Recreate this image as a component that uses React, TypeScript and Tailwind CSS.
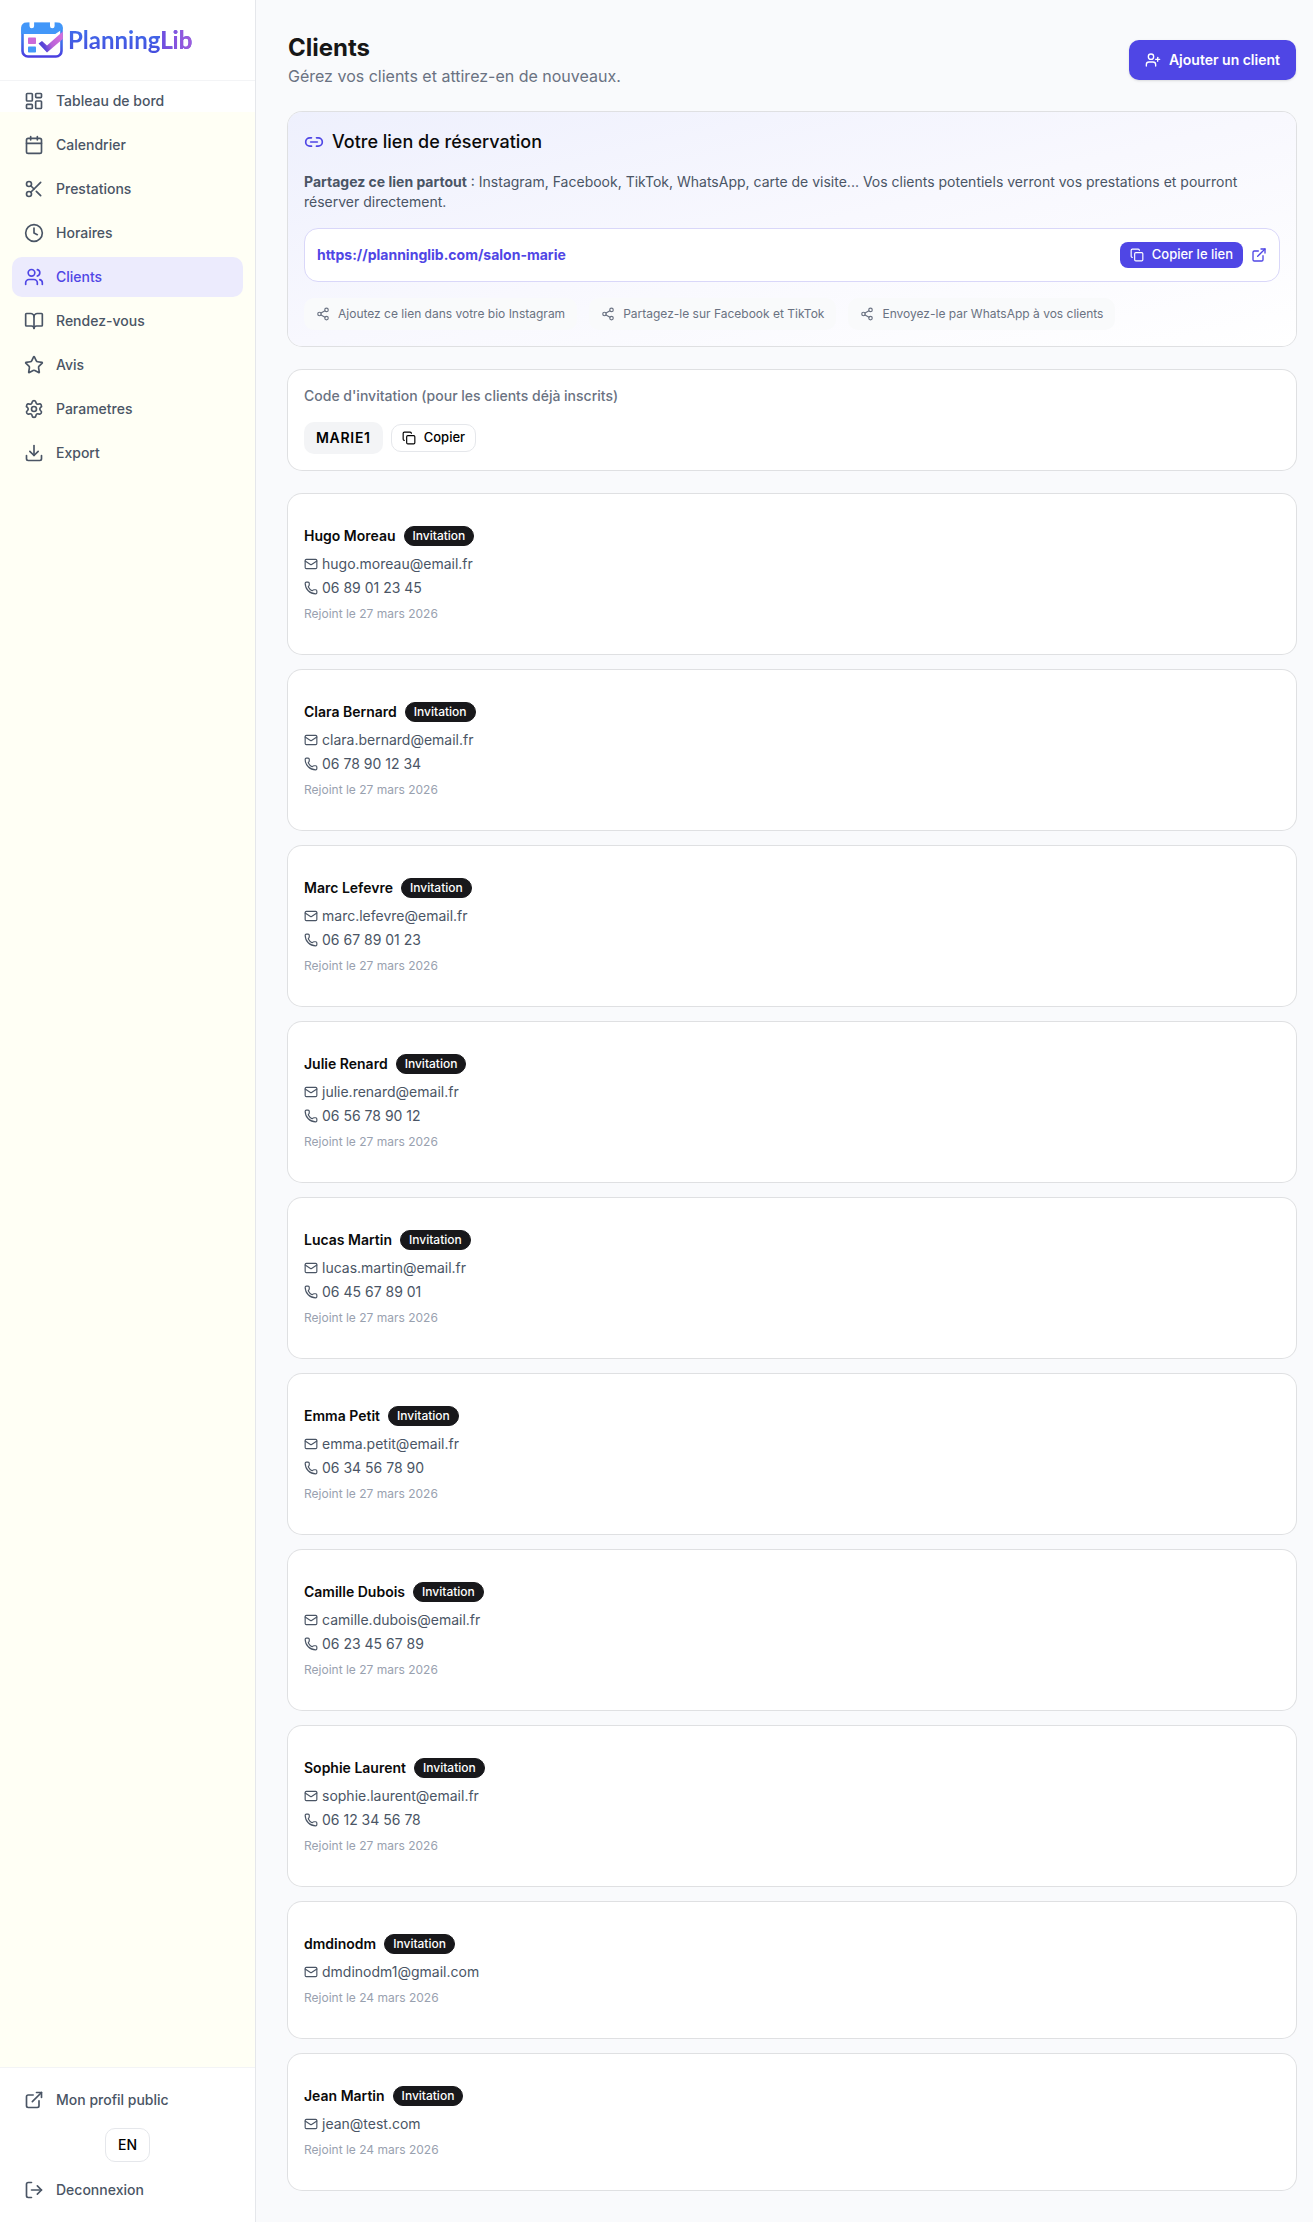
import {
  BookOpen,
  Calendar,
  Clock,
  Copy,
  Download,
  ExternalLink,
  LayoutDashboard,
  Link2,
  LogOut,
  Mail,
  Phone,
  Scissors,
  Settings,
  Share2,
  Star,
  UserPlus,
  Users,
} from "lucide-react";

const NAV = [
  { label: "Tableau de bord", href: "#dashboard", icon: LayoutDashboard },
  { label: "Calendrier", href: "#calendrier", icon: Calendar },
  { label: "Prestations", href: "#prestations", icon: Scissors },
  { label: "Horaires", href: "#horaires", icon: Clock },
  { label: "Clients", href: "#clients", icon: Users, active: true },
  { label: "Rendez-vous", href: "#rendez-vous", icon: BookOpen },
  { label: "Avis", href: "#avis", icon: Star },
  { label: "Parametres", href: "#parametres", icon: Settings },
  { label: "Export", href: "#export", icon: Download },
];

const TIPS = [
  "Ajoutez ce lien dans votre bio Instagram",
  "Partagez-le sur Facebook et TikTok",
  "Envoyez-le par WhatsApp à vos clients",
];

const CLIENTS = [
  { name: "Hugo Moreau", email: "hugo.moreau@email.fr", phone: "06 89 01 23 45", joined: "27 mars 2026" },
  { name: "Clara Bernard", email: "clara.bernard@email.fr", phone: "06 78 90 12 34", joined: "27 mars 2026" },
  { name: "Marc Lefevre", email: "marc.lefevre@email.fr", phone: "06 67 89 01 23", joined: "27 mars 2026" },
  { name: "Julie Renard", email: "julie.renard@email.fr", phone: "06 56 78 90 12", joined: "27 mars 2026" },
  { name: "Lucas Martin", email: "lucas.martin@email.fr", phone: "06 45 67 89 01", joined: "27 mars 2026" },
  { name: "Emma Petit", email: "emma.petit@email.fr", phone: "06 34 56 78 90", joined: "27 mars 2026" },
  { name: "Camille Dubois", email: "camille.dubois@email.fr", phone: "06 23 45 67 89", joined: "27 mars 2026" },
  { name: "Sophie Laurent", email: "sophie.laurent@email.fr", phone: "06 12 34 56 78", joined: "27 mars 2026" },
  { name: "dmdinodm", email: "dmdinodm1@gmail.com", joined: "24 mars 2026" },
  { name: "Jean Martin", email: "jean@test.com", joined: "24 mars 2026" },
];

const NAV_ITEM = "flex h-10 items-center gap-3 rounded-[10px] px-3 text-sm font-medium";

function Logo() {
  return (
    <a href="#accueil" className="flex items-center gap-1">
      <svg width="44" height="38" viewBox="0 0 44 38" fill="none" aria-hidden="true">
        <defs>
          <linearGradient id="frame" x1="0" y1="0" x2="0" y2="1">
            <stop offset="0" stopColor="#3f95f8" />
            <stop offset="0.6" stopColor="#3f6be8" />
            <stop offset="1" stopColor="#4a3fe0" />
          </linearGradient>
          <linearGradient id="check" x1="19" y1="26" x2="42" y2="16" gradientUnits="userSpaceOnUse">
            <stop offset="0" stopColor="#4a3fd8" />
            <stop offset="0.2" stopColor="#5b46d8" />
            <stop offset="0.5" stopColor="#b863d8" />
            <stop offset="1" stopColor="#d56fdc" />
          </linearGradient>
        </defs>
        <rect x="2.5" y="3" width="39" height="32.500" rx="5.5" fill="#fff" stroke="url(#frame)" strokeWidth="2.6" />
        <path d="M1.200 13V6.500a5 5 0 0 1 5-5h31.600a5 5 0 0 1 5 5V8l-7.500 5Z" fill="#4297f9" />
        <path d="M9.500 0v5a2.300 2.300 0 0 0 4.600 0V0ZM30 0v5a2.300 2.300 0 0 0 4.600 0V0Z" fill="#fff" />
        <rect x="8" y="16.500" width="8" height="6.500" rx="0.8" fill="#cb6ad8" />
        <rect x="8" y="25.500" width="8" height="6" rx="0.8" fill="#4499f8" />
        <path d="M18.500 22.500 22 20l5 4.500L42.800 10.500V18L27 31.500Z" fill="url(#check)" />
      </svg>
      <span className="bg-linear-to-b from-[#3d74ee] to-[#4648dc] bg-clip-text font-[Lato,sans-serif] text-2xl leading-8 font-bold text-transparent">
        Planning
        <span className="bg-linear-to-r from-[#6d4cdf] to-[#a35bdb] bg-clip-text">Lib</span>
      </span>
    </a>
  );
}

function Sidebar() {
  return (
    <aside className="flex w-64 shrink-0 flex-col border-r border-gray-200 bg-white">
      <div className="flex h-[81px] items-center border-b border-gray-100 px-5">
        <Logo />
      </div>

      <nav className="flex grow flex-col gap-1 bg-linear-to-b from-white from-[31px] to-[#fffff5] to-[31px] px-3">
        {NAV.map(({ label, href, icon: Icon, active }) => (
          <a
            key={label}
            href={href}
            aria-current={active ? "page" : undefined}
            className={`${NAV_ITEM} ${active ? "bg-[#ecebfd] text-[#4f46e5]" : "text-gray-600"}`}
          >
            <Icon size={20} />
            {label}
          </a>
        ))}
      </nav>

      <div className="flex flex-col gap-2 border-t border-gray-100 p-3">
        <a href="#profil" className={`${NAV_ITEM} text-gray-600`}>
          <ExternalLink size={20} />
          Mon profil public
        </a>
        <button
          type="button"
          className="h-[34px] self-center rounded-[10px] border border-gray-200 bg-white px-3 text-sm font-medium text-black"
        >
          EN
        </button>
        <button type="button" className={`${NAV_ITEM} text-gray-600`}>
          <LogOut size={20} />
          Deconnexion
        </button>
      </div>
    </aside>
  );
}

function BookingLink() {
  return (
    <section className="rounded-[14px] bg-linear-to-br from-[#eef0fd] via-[#f8f8fe] to-white p-4 ring-1 ring-black/10">
      <h2 className="flex items-center gap-2 text-lg leading-7 font-medium text-neutral-950">
        <Link2 size={20} className="text-[#4f46e5]" />
        Votre lien de réservation
      </h2>
      <p className="mt-4 text-sm text-gray-600">
        <strong className="font-bold">Partagez ce lien partout</strong> : Instagram, Facebook, TikTok, WhatsApp,
        carte de visite... Vos clients potentiels verront vos prestations et pourront réserver directement.
      </p>

      <div className="mt-4 flex h-[54px] items-center gap-2 rounded-[14px] border border-[#d9d7f9] bg-white px-3">
        <span className="grow text-sm font-bold text-[#4f46e5]">https://planninglib.com/salon-marie</span>
        <button
          type="button"
          className="flex h-[26px] items-center gap-2 rounded-lg bg-[#4f46e5] px-2.5 text-[13px] font-medium text-white"
        >
          <Copy size={14} />
          Copier le lien
        </button>
        <a href="https://planninglib.com/salon-marie" aria-label="Ouvrir le lien" className="text-[#4f46e5]">
          <ExternalLink size={16} />
        </a>
      </div>

      <ul className="mt-4 flex flex-wrap gap-3">
        {TIPS.map((tip) => (
          <li key={tip} className="flex h-8 items-center gap-2 rounded-[10px] bg-[#f9fafb] px-3 text-xs text-gray-500">
            <Share2 size={14} />
            {tip}
          </li>
        ))}
      </ul>
    </section>
  );
}

function InviteCode() {
  return (
    <section className="rounded-[14px] bg-white p-4 ring-1 ring-black/10">
      <p className="text-sm font-medium text-gray-500">Code d'invitation (pour les clients déjà inscrits)</p>
      <div className="mt-4 flex items-center gap-2">
        <code className="rounded-[10px] bg-gray-100 px-3 py-1.5 font-[Inter] text-sm font-semibold tracking-wider text-black">
          MARIE1
        </code>
        <button
          type="button"
          className="flex h-7 items-center gap-2 rounded-[10px] border border-gray-200 bg-white px-2.5 text-[13px] font-medium text-black"
        >
          <Copy size={14} />
          Copier
        </button>
      </div>
    </section>
  );
}

function ClientCard({ name, email, phone, joined }: { name: string; email: string; phone?: string; joined: string }) {
  return (
    <li className="rounded-[14px] bg-white px-4 py-8 ring-1 ring-black/10">
      <div className="flex items-center gap-2">
        <h3 className="text-sm font-semibold text-neutral-950">{name}</h3>
        <span className="flex h-5 items-center rounded-full border border-[#18181b] bg-[#18181b] px-2 text-xs font-medium text-white">
          Invitation
        </span>
      </div>
      <div className="mt-2 flex flex-col gap-1 text-sm text-gray-600">
        <p className="flex items-center gap-1">
          <Mail size={14} />
          {email}
        </p>
        {phone ? (
          <p className="flex items-center gap-1">
            <Phone size={14} />
            {phone}
          </p>
        ) : null}
      </div>
      <p className="mt-2 text-xs text-gray-400">Rejoint le {joined}</p>
    </li>
  );
}

export default function App() {
  return (
    <div className="flex min-h-screen bg-[#f9fafc] font-[Inter,sans-serif]">
      <Sidebar />
      <main className="flex min-w-0 grow flex-col gap-6 py-8 pr-[17px] pl-8">
        <header className="flex items-center justify-between">
          <div>
            <h1 className="text-2xl font-bold text-neutral-900">Clients</h1>
            <p className="text-base text-gray-500">Gérez vos clients et attirez-en de nouveaux.</p>
          </div>
          <button
            type="button"
            className="flex h-10 items-center gap-2 rounded-[10px] bg-[#4f46e5] px-4 text-sm font-semibold text-white shadow-sm"
          >
            <UserPlus size={16} />
            Ajouter un client
          </button>
        </header>

        <BookingLink />
        <InviteCode />

        <ul className="flex flex-col gap-4">
          {CLIENTS.map((client) => (
            <ClientCard key={client.email} {...client} />
          ))}
        </ul>
      </main>
    </div>
  );
}
